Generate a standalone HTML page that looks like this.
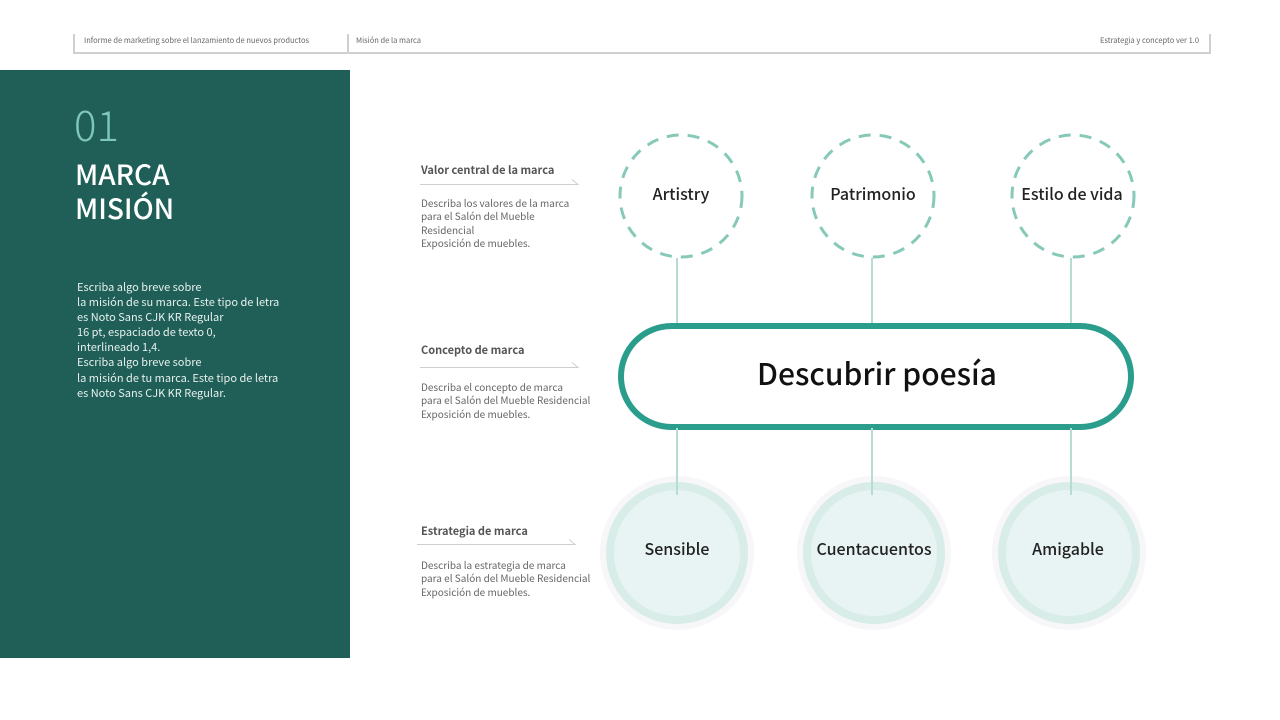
<!DOCTYPE html>
<html><head><meta charset="utf-8"><style>
*{margin:0;padding:0;box-sizing:border-box}
body{width:1280px;height:720px;background:#fff;position:relative;overflow:hidden;font-family:"Noto Sans CJK KR","Liberation Sans",sans-serif}
.t{position:absolute;white-space:nowrap}
.hdr{font-size:7.5px;color:#666}
.lab{font-size:11px;color:#555;font-weight:700}
.desc{font-size:10px;color:#666;line-height:13.3px}
</style></head><body>
<div style="position:absolute;left:73px;top:52px;width:1138px;height:2px;background:#d0d0d0"></div>
<div style="position:absolute;left:73px;top:34px;width:2px;height:20px;background:#d0d0d0"></div>
<div style="position:absolute;left:347px;top:34px;width:2px;height:20px;background:#d0d0d0"></div>
<div style="position:absolute;left:1209px;top:34px;width:2px;height:20px;background:#d0d0d0"></div>
<div class="t hdr" style="left:84px;top:35px">Informe de marketing sobre el lanzamiento de nuevos productos</div>
<div class="t hdr" style="left:356px;top:35px">Misión de la marca</div>
<div class="t hdr" style="left:1100px;top:35px">Estrategia y concepto ver 1.0</div>

<div style="position:absolute;left:0;top:70px;width:350px;height:588px;background:#1f5f58"></div>
<div class="t" style="left:74px;top:98px;font-size:42px;font-weight:300;color:#7fc7b9;line-height:52px">01</div>
<div class="t" style="left:75px;top:157px;font-size:28px;font-weight:500;color:#fff;line-height:34px">MARCA<br>MISIÓN</div>
<div class="t" style="left:77px;top:280px;font-size:11px;color:#e8f0ee;line-height:15.1px">Escriba algo breve sobre<br>la misión de su marca. Este tipo de letra<br>es Noto Sans CJK KR Regular<br>16 pt, espaciado de texto 0,<br>interlineado 1,4.<br>Escriba algo breve sobre<br>la misión de tu marca. Este tipo de letra<br>es Noto Sans CJK KR Regular.</div>

<div class="t lab" style="left:421px;top:162px">Valor central de la marca</div>
<div class="t desc" style="left:421px;top:196px">Describa los valores de la marca<br>para el Salón del Mueble<br>Residencial<br>Exposición de muebles.</div>
<div class="t lab" style="left:421px;top:342px">Concepto de marca</div>
<div class="t desc" style="left:421px;top:380px">Describa el concepto de marca<br>para el Salón del Mueble Residencial<br>Exposición de muebles.</div>
<div class="t lab" style="left:421px;top:523px">Estrategia de marca</div>
<div class="t desc" style="left:421px;top:558px">Describa la estrategia de marca<br>para el Salón del Mueble Residencial<br>Exposición de muebles.</div>

<svg width="1280" height="720" style="position:absolute;left:0;top:0" xmlns="http://www.w3.org/2000/svg">
<g stroke="#cfcfcf" stroke-width="1" fill="none">
<path d="M420 184.5H578l-6-5"/><path d="M420 367.5H578l-6-5"/><path d="M417 544.5H575l-6-5"/>
</g>
<g stroke="#b5ddd5" stroke-width="2">
<line x1="677" y1="258" x2="677" y2="326"/><line x1="872" y1="258" x2="872" y2="326"/><line x1="1071" y1="258" x2="1071" y2="326"/>
</g>
<g fill="none" stroke="#86c9b9" stroke-width="3" stroke-dasharray="12 9">
<circle cx="681" cy="196" r="61"/><circle cx="873" cy="196" r="61"/><circle cx="1073" cy="196" r="61"/>
</g>
<rect x="621" y="326" width="510" height="101" rx="50.5" fill="#fff" stroke="#2a9d8c" stroke-width="6"/>
<g>
<circle cx="677" cy="553" r="77" fill="#f7f6f8"/><circle cx="677" cy="553" r="67" fill="#e8f4f3" stroke="#d8ece8" stroke-width="8"/>
<circle cx="874" cy="553" r="77" fill="#f7f6f8"/><circle cx="874" cy="553" r="67" fill="#e8f4f3" stroke="#d8ece8" stroke-width="8"/>
<circle cx="1069" cy="553" r="77" fill="#f7f6f8"/><circle cx="1069" cy="553" r="67" fill="#e8f4f3" stroke="#d8ece8" stroke-width="8"/>
</g>
<g stroke="#b5ddd5" stroke-width="2">
<line x1="677" y1="428" x2="677" y2="495"/><line x1="872" y1="428" x2="872" y2="495"/><line x1="1071" y1="428" x2="1071" y2="495"/>
</g>
<g font-family="Noto Sans CJK KR, Liberation Sans, sans-serif" fill="#222" text-anchor="middle" font-size="16" font-weight="500">
<text x="681" y="200">Artistry</text><text x="873" y="200">Patrimonio</text><text x="1072" y="200">Estilo de vida</text>
<text x="677" y="555">Sensible</text><text x="874" y="555">Cuentacuentos</text><text x="1068" y="555">Amigable</text>
<text x="877" y="385" font-size="30" fill="#111">Descubrir poesía</text>
</g>
</svg>
</body></html>
